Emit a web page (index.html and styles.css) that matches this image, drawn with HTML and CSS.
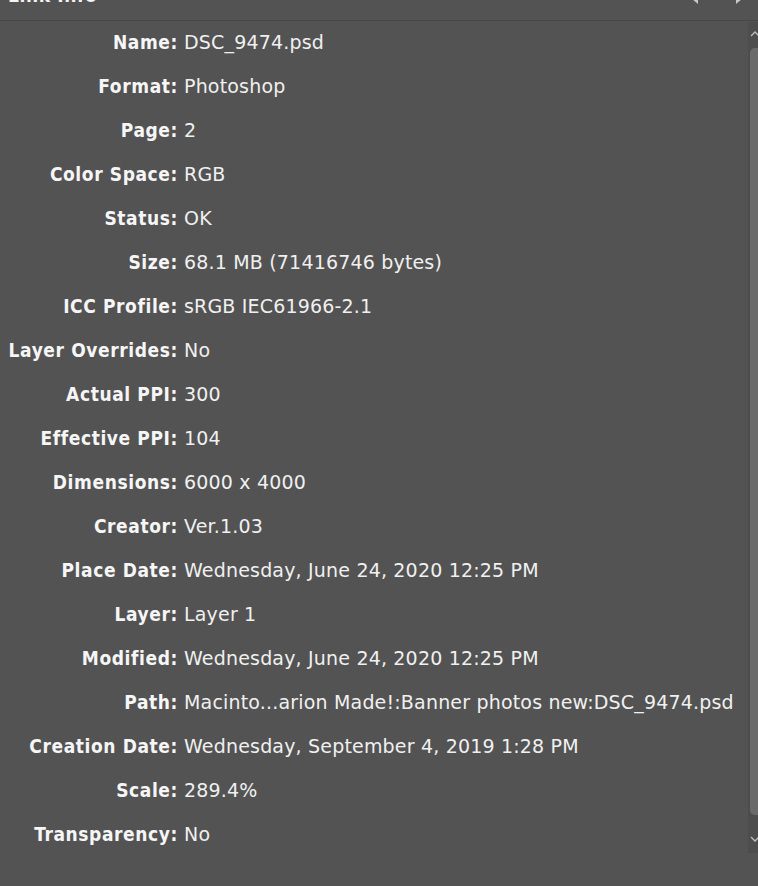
FILE: index.html
```html
<!DOCTYPE html>
<html>
<head>
<meta charset="utf-8">
<link rel="stylesheet" href="styles.css">
</head>
<body>
<div class="panel">
  <div class="header">
    <div class="title">Link Info</div>
    <div class="nav">
      <span class="tri tri-left"></span>
      <span class="tri tri-right"></span>
    </div>
  </div>
  <div class="content">
    <div class="info">
      <div class="label">Name:</div><div class="value">DSC_9474.psd</div>
      <div class="label">Format:</div><div class="value">Photoshop</div>
      <div class="label">Page:</div><div class="value">2</div>
      <div class="label">Color Space:</div><div class="value">RGB</div>
      <div class="label">Status:</div><div class="value">OK</div>
      <div class="label">Size:</div><div class="value">68.1 MB (71416746 bytes)</div>
      <div class="label">ICC Profile:</div><div class="value">sRGB IEC61966-2.1</div>
      <div class="label">Layer Overrides:</div><div class="value">No</div>
      <div class="label">Actual PPI:</div><div class="value">300</div>
      <div class="label">Effective PPI:</div><div class="value">104</div>
      <div class="label">Dimensions:</div><div class="value">6000 x 4000</div>
      <div class="label">Creator:</div><div class="value">Ver.1.03</div>
      <div class="label">Place Date:</div><div class="value">Wednesday, June 24, 2020 12:25 PM</div>
      <div class="label">Layer:</div><div class="value">Layer 1</div>
      <div class="label">Modified:</div><div class="value">Wednesday, June 24, 2020 12:25 PM</div>
      <div class="label">Path:</div><div class="value">Macinto...arion Made!:Banner photos new:DSC_9474.psd</div>
      <div class="label">Creation Date:</div><div class="value">Wednesday, September 4, 2019 1:28 PM</div>
      <div class="label">Scale:</div><div class="value">289.4%</div>
      <div class="label">Transparency:</div><div class="value">No</div>
    </div>
    <div class="scrollbar">
      <svg class="arrow" width="8" height="8" viewBox="0 0 8 8"><path d="M1 6 L5 2 L9 6" fill="none" stroke="#bdbdbd" stroke-width="1.3"/></svg>
      <div class="thumb"></div>
      <svg class="arrow" width="8" height="8" viewBox="0 0 8 8"><path d="M1 2 L5 6 L9 2" fill="none" stroke="#bdbdbd" stroke-width="1.3"/></svg>
    </div>
  </div>
</div>
</body>
</html>
```
FILE: styles.css
```css
html, body {
  margin: 0;
  padding: 0;
  background: #535353;
  width: 758px;
  height: 886px;
  overflow: hidden;
}
.panel {
  display: flex;
  flex-direction: column;
  height: 886px;
  font-family: "DejaVu Sans", "Liberation Sans", sans-serif;
  color: #f0f0f0;
}
.header {
  height: 20px;
  border-bottom: 1px solid #474747;
  display: flex;
  justify-content: space-between;
  overflow: hidden;
  flex-shrink: 0;
}
.title {
  font-family: "DejaVu Sans Condensed", "DejaVu Sans", sans-serif;
  font-weight: bold;
  font-size: 19px;
  letter-spacing: 0.6px;
  line-height: 20px;
  margin-top: -15px;
  margin-left: 8px;
  color: #f4f4f4;
}
.nav {
  display: flex;
  gap: 38px;
  margin-right: 16px;
  margin-top: -6px;
}
.tri {
  width: 0;
  height: 0;
  border-top: 5px solid transparent;
  border-bottom: 5px solid transparent;
}
.tri-left {
  border-right: 6px solid #c8c8c8;
}
.tri-right {
  border-left: 6px solid #c8c8c8;
}
.content {
  display: flex;
  flex: 0 0 auto;
}
.info {
  flex: 1;
  display: grid;
  grid-template-columns: 178px auto;
  grid-auto-rows: 44px;
  column-gap: 6px;
  align-items: center;
  font-size: 19px;
  margin-top: -1px;
}
.label {
  text-align: right;
  font-family: "DejaVu Sans Condensed", "DejaVu Sans", sans-serif;
  font-weight: bold;
  letter-spacing: 0.6px;
  color: #f6f6f6;
  white-space: nowrap;
}
.value {
  white-space: nowrap;
  letter-spacing: 0.18px;
  color: #f0f0f0;
}
.scrollbar {
  width: 10px;
  margin-top: 1px;
  height: 831px;
  background: #4d4d4d;
  display: flex;
  flex-direction: column;
  align-items: flex-end;
  padding-top: 8px;
  box-sizing: border-box;
}
.arrow {
  display: block;
  flex-shrink: 0;
}
.thumb {
  width: 8px;
  height: 767px;
  margin: 10px 0 20px;
  background: #6a6a6a;
  border-radius: 5px 0 0 5px;
}
```
